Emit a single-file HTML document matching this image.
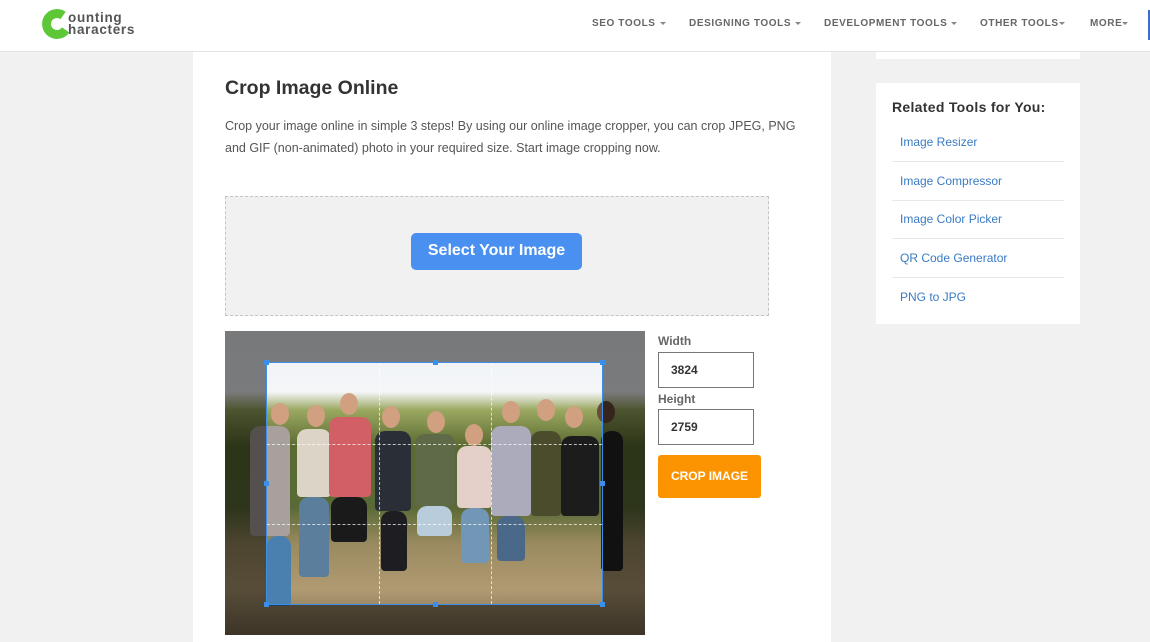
<!DOCTYPE html>
<html><head><meta charset="utf-8"><style>
*{margin:0;padding:0;box-sizing:border-box}
body{width:1150px;height:642px;overflow:hidden;background:#f1f1f1;font-family:"Liberation Sans",Arial,sans-serif;position:relative}
.a{position:absolute}
#hdr{left:0;top:0;width:1150px;height:52px;background:#fff;border-bottom:1px solid #e3e3e3}
.nav{top:18px;font-size:10px;font-weight:bold;color:#666;letter-spacing:.6px;white-space:nowrap}
.car{display:inline-block;border-left:3px solid transparent;border-right:3px solid transparent;border-top:3px solid #888;vertical-align:middle;margin-left:4px}
#main{left:193px;top:52px;width:638px;height:590px;background:#fff}
h1{position:absolute;left:225px;top:77px;font-size:19.5px;color:#333;font-weight:bold}
.p{left:225px;top:115px;width:600px;font-size:12.5px;line-height:22px;color:#555;white-space:nowrap}
#drop{left:225px;top:196px;width:544px;height:120px;background:#f1f1f1;border:1px dashed #c4c4c4}
#btn{left:411px;top:233px;width:171px;height:37px;background:#4a90f0;border-radius:5px;color:#fff;font-weight:bold;font-size:16px;text-align:center;line-height:36px}
#img{left:225px;top:331px;width:420px;height:304px;overflow:hidden;background:linear-gradient(180deg,#eef2f6 0,#f4f6f8 20%,#9aa860 26%,#5a6a30 38%,#5a6a36 58%,#9a8a60 70%,#b09a72 85%,#7a6a50 100%)}
.pp{position:absolute;border-radius:10px 10px 4px 4px}
.hd{position:absolute;width:18px;height:22px;border-radius:50%;background:#d0a080}
#crop{left:41px;top:31px;width:337px;height:243px;border:1px solid #3b8fe8;box-shadow:0 0 0 600px rgba(0,0,0,.5)}
.dl{position:absolute;border-color:rgba(255,255,255,.7);border-style:dashed;border-width:0}
.h{position:absolute;width:5px;height:5px;background:#3b8fe8}
.lbl{font-size:12px;font-weight:bold;color:#666}
.in{width:96px;height:36px;border:1px solid #777;font-size:12px;font-weight:bold;color:#333;padding:10px 12px;background:#fff}
#cb{left:658px;top:455px;width:103px;height:43px;background:#fb9400;border-radius:3px;color:#fff;font-size:12px;font-weight:bold;text-align:center;line-height:42px}
#side{left:876px;top:83px;width:204px;height:241px;background:#fff}
.sl{left:16px;width:172px;font-size:12px;color:#3a7bc4;padding-left:8px;border-bottom:1px solid #e8e8e8;height:39px;line-height:38px}
</style></head><body>
<div id="hdr" class="a"></div>
<div class="a" style="left:42px;top:9px;width:30px;height:30px;border-radius:50%;border:9px solid #5ec738;border-right-color:transparent;transform:rotate(-10deg)"></div>
<div class="a" style="left:68px;top:12px;font-size:13.5px;font-weight:bold;color:#555;line-height:11.5px;letter-spacing:.7px">ounting<br>haracters</div>
<div class="a nav" style="left:592px">SEO TOOLS<span class="car"></span></div>
<div class="a nav" style="left:689px">DESIGNING TOOLS<span class="car"></span></div>
<div class="a nav" style="left:824px">DEVELOPMENT TOOLS<span class="car"></span></div>
<div class="a nav" style="left:980px">OTHER TOOLS<span class="car" style="margin-left:0"></span></div>
<div class="a nav" style="left:1090px">MORE<span class="car" style="margin-left:0"></span></div>
<div class="a" style="left:1148px;top:10px;width:2px;height:30px;background:#3a6fc4"></div>
<div class="a" style="left:876px;top:52px;width:204px;height:7px;background:#fff"></div>
<div id="main" class="a"></div>
<h1>Crop Image Online</h1>
<div class="a p">Crop your image online in simple 3 steps! By using our online image cropper, you can crop JPEG, PNG<br>and GIF (non-animated) photo in your required size. Start image cropping now.</div>
<div id="drop" class="a"></div>
<div id="btn" class="a">Select Your Image</div>
<div id="img" class="a">
 <div class="pp" style="left:25px;top:95px;width:40px;height:110px;background:#a8a09c"></div>
 <div class="pp" style="left:42px;top:205px;width:24px;height:70px;background:#4a80b0"></div>
 <div class="pp" style="left:72px;top:98px;width:34px;height:68px;background:#dcd4c6"></div>
 <div class="pp" style="left:74px;top:166px;width:30px;height:80px;background:#5a7e9c"></div>
 <div class="pp" style="left:104px;top:86px;width:42px;height:80px;background:#d25e66"></div>
 <div class="pp" style="left:106px;top:166px;width:36px;height:45px;background:#1a1a1a"></div>
 <div class="pp" style="left:150px;top:100px;width:36px;height:80px;background:#2a2e36"></div>
 <div class="pp" style="left:156px;top:180px;width:26px;height:60px;background:#1e1e22"></div>
 <div class="pp" style="left:190px;top:103px;width:40px;height:72px;background:#5e6a48"></div>
 <div class="pp" style="left:192px;top:175px;width:35px;height:30px;background:#b8ccdc"></div>
 <div class="pp" style="left:232px;top:115px;width:35px;height:62px;background:#e4d0c8"></div>
 <div class="pp" style="left:236px;top:177px;width:28px;height:55px;background:#7296b6"></div>
 <div class="pp" style="left:266px;top:95px;width:40px;height:90px;background:#ababbc"></div>
 <div class="pp" style="left:272px;top:185px;width:28px;height:45px;background:#4a6888"></div>
 <div class="pp" style="left:306px;top:100px;width:30px;height:85px;background:#4a4c2c"></div>
 <div class="pp" style="left:336px;top:105px;width:38px;height:80px;background:#1c1c1c"></div>
 <div class="pp" style="left:376px;top:100px;width:22px;height:140px;background:#222"></div>
 <div class="hd" style="left:46px;top:72px"></div><div class="hd" style="left:82px;top:74px"></div>
 <div class="hd" style="left:115px;top:62px"></div><div class="hd" style="left:157px;top:75px"></div>
 <div class="hd" style="left:202px;top:80px"></div><div class="hd" style="left:240px;top:93px"></div>
 <div class="hd" style="left:277px;top:70px"></div><div class="hd" style="left:312px;top:68px"></div>
 <div class="hd" style="left:340px;top:75px"></div><div class="hd" style="left:372px;top:70px;background:#6a4a38"></div>
 <div class="a" id="crop">
  <div class="dl" style="left:112px;top:0;height:100%;border-left-width:1px"></div>
  <div class="dl" style="left:224px;top:0;height:100%;border-left-width:1px"></div>
  <div class="dl" style="top:81px;left:0;width:100%;border-top-width:1px"></div>
  <div class="dl" style="top:161px;left:0;width:100%;border-top-width:1px"></div>
  <div class="h" style="left:-3px;top:-3px"></div><div class="h" style="left:166px;top:-3px"></div><div class="h" style="right:-3px;top:-3px"></div>
  <div class="h" style="left:-3px;top:118px"></div><div class="h" style="right:-3px;top:118px"></div>
  <div class="h" style="left:-3px;bottom:-3px"></div><div class="h" style="left:166px;bottom:-3px"></div><div class="h" style="right:-3px;bottom:-3px"></div>
 </div>
</div>
<div class="a lbl" style="left:658px;top:334px">Width</div>
<div class="a in" style="left:658px;top:352px">3824</div>
<div class="a lbl" style="left:658px;top:392px">Height</div>
<div class="a in" style="left:658px;top:409px">2759</div>
<div id="cb" class="a">CROP IMAGE</div>
<div id="side" class="a">
 <div class="a" style="left:16px;top:16px;font-size:14px;font-weight:bold;color:#333;letter-spacing:.3px">Related Tools for You:</div>
 <div class="a sl" style="top:40px">Image Resizer</div>
 <div class="a sl" style="top:79px">Image Compressor</div>
 <div class="a sl" style="top:117px">Image Color Picker</div>
 <div class="a sl" style="top:156px">QR Code Generator</div>
 <div class="a sl" style="top:195px;border:0">PNG to JPG</div>
</div>
</body></html>
